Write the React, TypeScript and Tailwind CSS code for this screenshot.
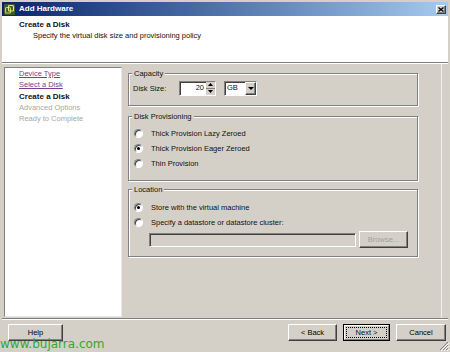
import type { ReactNode } from 'react';

const FACE = 'bg-[#d4d0c8]';
const RAISED = 'border border-t-white border-l-white border-r-[#404040] border-b-[#404040] shadow-[inset_-1px_-1px_0_#808080]';
const SUNKEN = 'border border-t-[#808080] border-l-[#808080] border-r-white border-b-white shadow-[inset_1px_1px_0_#404040]';

function Radio({ checked }: { checked?: boolean }) {
  return (
    <span className={`w-[9px] h-[9px] rounded-full bg-white ${SUNKEN} flex items-center justify-center shrink-0`}>
      {checked && <span className="w-[3px] h-[3px] rounded-full bg-black" />}
    </span>
  );
}

function GroupBox({ label, className, children }: { label: string; className?: string; children?: ReactNode }) {
  return (
    <div className={`relative w-[290px] border border-[#808080] shadow-[inset_1px_1px_0_#fff,1px_1px_0_#fff] ${className ?? ''}`}>
      <span className={`absolute top-[-6px] left-[3px] px-[2px] ${FACE} leading-[11px]`}>{label}</span>
      {children}
    </div>
  );
}

function Btn({ children, className, disabled }: { children: ReactNode; className?: string; disabled?: boolean }) {
  return (
    <div className={`h-[17px] ${FACE} ${RAISED} flex items-center justify-center ${disabled ? 'text-[#a0a0a0]' : 'text-black'} ${className ?? ''}`}>
      {children}
    </div>
  );
}

function Tri({ dir }: { dir: 'up' | 'down' }) {
  return (
    <svg width="5" height="3" viewBox="0 0 5 3">
      {dir === 'up' ? <path d="M2.5 0L5 3H0z" fill="#000" /> : <path d="M0 0h5L2.5 3z" fill="#000" />}
    </svg>
  );
}

export default function App() {
  return (
    <div className={`w-[450px] h-[352px] ${FACE} relative overflow-hidden flex flex-col px-[2px] pt-[2px] font-['Liberation_Sans',Arial,sans-serif] text-[7.5px] text-[#111]`}>
      {/* Title bar */}
      <div className="h-[14px] flex items-center bg-linear-to-r from-[#0a246a] to-[#a6caf0] pl-[2px] pr-[2px]">
        <svg width="11" height="11" viewBox="0 0 11 11" className="shrink-0">
          <rect x="0" y="0" width="11" height="11" rx="1" fill="#3c5a2c" />
          <rect x="1.5" y="3.5" width="5" height="5.5" rx="1" fill="none" stroke="#c9d24a" strokeWidth="1.2" />
          <rect x="4.5" y="1.5" width="5" height="5.5" rx="1" fill="none" stroke="#e4e880" strokeWidth="1.2" />
        </svg>
        <span className="ml-[4px] text-white font-bold text-[8px] leading-[14px]">Add Hardware</span>
        <div className={`ml-auto w-[10px] h-[9px] ${FACE} ${RAISED} flex items-center justify-center`}>
          <svg width="6" height="5" viewBox="0 0 6 5">
            <path d="M0.5 0.5L5.5 4.5M5.5 0.5L0.5 4.5" stroke="#000" strokeWidth="1.3" />
          </svg>
        </div>
      </div>

      {/* Header */}
      <div className="h-[46px] bg-white pl-[17px] pt-[4px]">
        <div className="font-bold text-[8px] leading-[10px]">Create a Disk</div>
        <div className="pl-[14px] mt-[1px] leading-[10px]">Specify the virtual disk size and provisioning policy</div>
      </div>
      <div className="h-[2px] border-t border-t-[#808080] border-b border-b-white" />

      {/* Body */}
      <div className="flex h-[254px]">
        <div className="ml-[2px] mt-[3px] w-[118px] h-[250px] bg-white border border-t-[#808080] border-l-[#808080] border-r-[#e8e8e8] border-b-[#e8e8e8] pl-[14px] leading-[11.3px]">
          <div className="text-[#7b3f8f] underline">Device Type</div>
          <div className="text-[#7b3f8f] underline">Select a Disk</div>
          <div className="font-bold text-[8px]">Create a Disk</div>
          <div className="text-[#a8a8a8]">Advanced Options</div>
          <div className="text-[#a8a8a8]">Ready to Complete</div>
        </div>

        <div className="ml-[2px] w-[318px] pl-[4px] pt-[9px] flex flex-col border-r border-r-[#eeeeea]">
          <GroupBox label="Capacity" className="h-[33px]">
            <div className="flex items-center pl-[4px] pt-[7px]">
              <span className="w-[46px] leading-[15px]">Disk Size:</span>
              <div className={`w-[37px] h-[15px] bg-white ${SUNKEN} flex`}>
                <span className="flex-1 text-right pr-[2px] leading-[12px]">20</span>
                <div className="w-[9px] flex flex-col">
                  <div className={`h-1/2 ${FACE} flex items-center justify-center border-b border-b-[#808080]`}>
                    <Tri dir="up" />
                  </div>
                  <div className={`h-1/2 ${FACE} flex items-center justify-center`}>
                    <Tri dir="down" />
                  </div>
                </div>
              </div>
              <div className={`ml-[8px] w-[33px] h-[15px] bg-white ${SUNKEN} flex`}>
                <span className="flex-1 pl-[2px] leading-[12px]">GB</span>
                <div className={`w-[11px] ${FACE} ${RAISED} flex items-center justify-center`}>
                  <svg width="6" height="3" viewBox="0 0 6 3"><path d="M0 0h6L3 3z" fill="#000" /></svg>
                </div>
              </div>
            </div>
          </GroupBox>

          <GroupBox label="Disk Provisioning" className="h-[65px] mt-[10px]">
            <div className="flex flex-col pt-[9px] pl-[5px]">
              {[
                ['Thick Provision Lazy Zeroed', false],
                ['Thick Provision Eager Zeroed', true],
                ['Thin Provision', false],
              ].map(([label, on]) => (
                <div key={label as string} className="h-[15px] flex items-center">
                  <Radio checked={on as boolean} />
                  <span className="ml-[8px]">{label}</span>
                </div>
              ))}
            </div>
          </GroupBox>

          <GroupBox label="Location" className="h-[68px] mt-[8px]">
            <div className="flex flex-col pt-[10px] pl-[5px]">
              <div className="h-[15px] flex items-center">
                <Radio checked />
                <span className="ml-[8px]">Store with the virtual machine</span>
              </div>
              <div className="h-[15px] flex items-center">
                <Radio />
                <span className="ml-[8px]">Specify a datastore or datastore cluster:</span>
              </div>
              <div className="flex items-center mt-[1px] pl-[15px]">
                <div className={`w-[207px] h-[14px] ${FACE} ${SUNKEN}`} />
                <Btn disabled className="ml-[3px] w-[49px] h-[15px]">Browse...</Btn>
              </div>
            </div>
          </GroupBox>
        </div>
      </div>

      <div className="h-[2px] border-t border-t-[#808080] border-b border-b-white" />

      {/* Buttons */}
      <div className="flex items-start pt-[4px]">
        <Btn className="ml-[6px] w-[55px]">Help</Btn>
        <Btn className="ml-auto w-[49px]">&lt; Back</Btn>
        <div className="ml-[6px] w-[47px] h-[17px] border border-black">
          <div className="h-full bg-[#d4d0c8] border border-t-white border-l-white border-r-[#808080] border-b-[#808080] p-[1px]">
            <div className="h-full border border-dotted border-black flex items-center justify-center">Next &gt;</div>
          </div>
        </div>
        <Btn className="ml-[6px] mr-[2px] w-[50px]">Cancel</Btn>
      </div>

      {/* Size grip */}
      <svg className="absolute right-[1px] bottom-[1px]" width="10" height="10" viewBox="0 0 10 10">
        <path d="M9 1L1 9M9 4L4 9M9 7L7 9" stroke="#808080" strokeWidth="1" />
        <path d="M10 2L2 10M10 5L5 10M10 8L8 10" stroke="#ffffff" strokeWidth="1" />
      </svg>

      {/* Watermark */}
      <span className="absolute left-0 top-[337px] font-['DejaVu_Sans',sans-serif] text-[12px] leading-[14px] text-[#35a535]">
        www.bujarra.com
      </span>
    </div>
  );
}
